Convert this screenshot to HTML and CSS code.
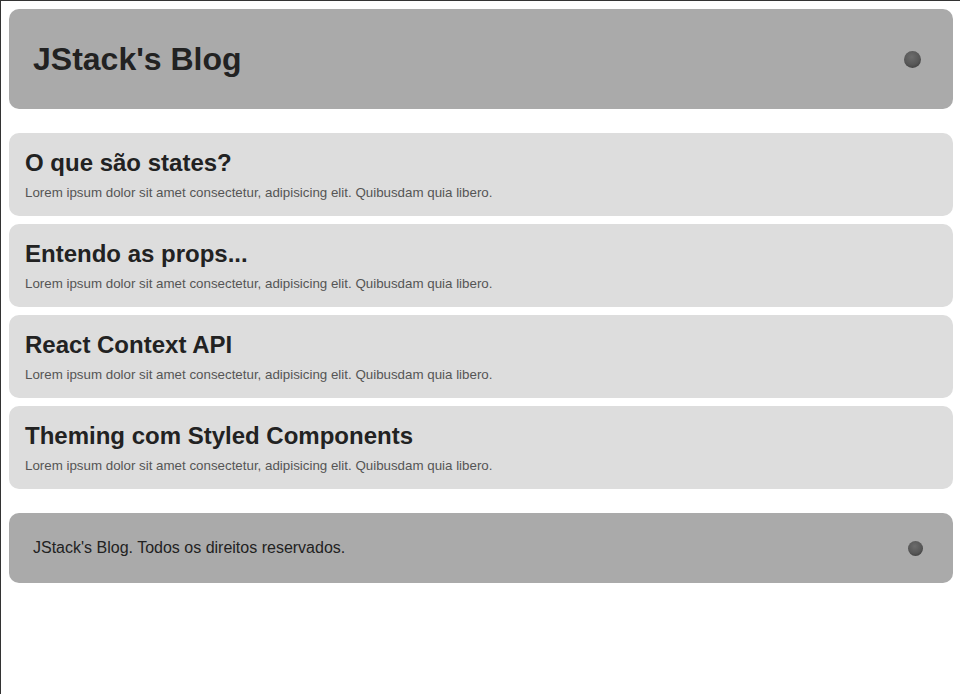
FILE: index.html
```html
<!DOCTYPE html>
<html lang="pt-BR">
<head>
<meta charset="utf-8">
<title>JStack's Blog</title>
<link rel="stylesheet" href="styles.css">
</head>
<body>
<header class="header">
  <h1 class="header-title">JStack's Blog</h1>
  <button class="theme-toggle" aria-label="Alternar tema"></button>
</header>
<main class="posts">
  <article class="post">
    <h2 class="post-title">O que são states?</h2>
    <small class="post-desc">Lorem ipsum dolor sit amet consectetur, adipisicing elit. Quibusdam quia libero.</small>
  </article>
  <article class="post">
    <h2 class="post-title">Entendo as props...</h2>
    <small class="post-desc">Lorem ipsum dolor sit amet consectetur, adipisicing elit. Quibusdam quia libero.</small>
  </article>
  <article class="post">
    <h2 class="post-title">React Context API</h2>
    <small class="post-desc">Lorem ipsum dolor sit amet consectetur, adipisicing elit. Quibusdam quia libero.</small>
  </article>
  <article class="post">
    <h2 class="post-title">Theming com Styled Components</h2>
    <small class="post-desc">Lorem ipsum dolor sit amet consectetur, adipisicing elit. Quibusdam quia libero.</small>
  </article>
</main>
<footer class="footer">
  <span class="footer-text">JStack's Blog. Todos os direitos reservados.</span>
  <button class="theme-toggle small" aria-label="Alternar tema"></button>
</footer>
</body>
</html>
```
FILE: styles.css
```css
html {
  border-top: 1px solid #333;
  border-left: 1px solid #333;
  min-height: 100%;
  box-sizing: border-box;
  background: #fff;
}
body {
  margin: 8px 7px 8px 8px;
  font-family: "Liberation Sans", Arial, sans-serif;
  color: #222;
}
.header {
  height: 100px;
  box-sizing: border-box;
  background: #aaaaaa;
  border-radius: 10px;
  padding: 0 24px;
  display: flex;
  align-items: center;
  justify-content: space-between;
}
.header-title {
  margin: 0;
  font-size: 32px;
  font-weight: bold;
  color: #222;
}
.theme-toggle {
  width: 17px;
  height: 17px;
  padding: 0;
  border: none;
  border-radius: 50%;
  margin-right: 8px;
  background: radial-gradient(circle at 45% 35%, #6c6c6c 0%, #575757 55%, #2f2f2f 100%);
}
.theme-toggle.small {
  width: 15px;
  height: 15px;
  margin-right: 6px;
}
.posts {
  margin: 24px 0;
  display: flex;
  flex-direction: column;
  gap: 8px;
}
.post {
  background: #dddddd;
  border-radius: 10px;
  padding: 16px;
  height: 83px;
  box-sizing: border-box;
}
.post-title {
  margin: 0 0 8px;
  font-size: 24px;
  line-height: 28px;
  font-weight: bold;
  color: #222;
}
.post-desc {
  display: block;
  font-size: 13.333px;
  line-height: 15px;
  color: #555;
}
.footer {
  height: 70px;
  box-sizing: border-box;
  background: #aaaaaa;
  border-radius: 10px;
  padding: 0 24px;
  display: flex;
  align-items: center;
  justify-content: space-between;
}
.footer-text {
  font-size: 16px;
  color: #222;
}
```
